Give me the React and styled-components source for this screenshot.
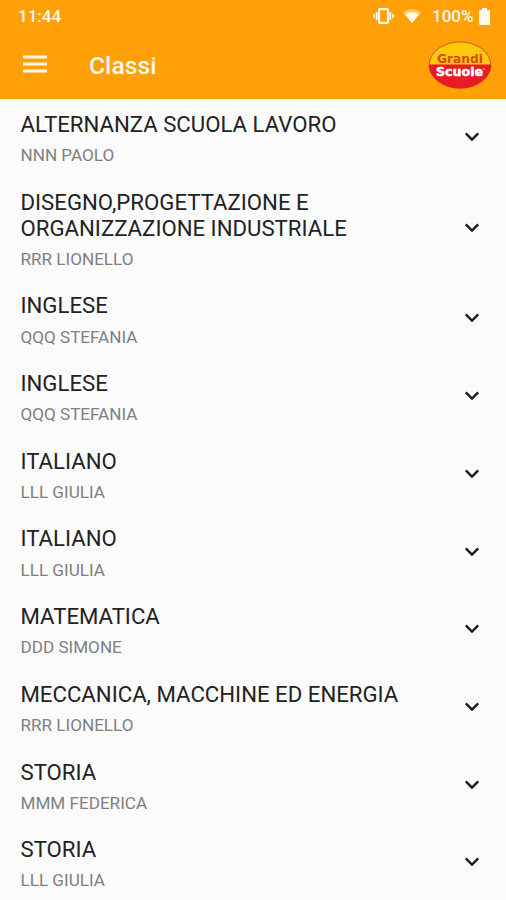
import React from 'react';
import styled, { createGlobalStyle } from 'styled-components';

const GlobalStyle = createGlobalStyle`
    body {
        margin: 0;
        background: #fbfbfb;
        font-family: Roboto, "Liberation Sans", sans-serif;
    }
`

const Screen = styled.div`
    width: 506px;
    height: 900px;
    overflow: hidden;
    background: #fbfbfb;
`

const Header = styled.header`
    height: 98.5px;
    background: #ffa006;
    color: #fff8ec;
`

const StatusBar = styled.div`
    display: flex;
    align-items: center;
    height: 32px;
    padding: 0 16px 0 18px;
    box-sizing: border-box;
    font-size: 17px;
    font-weight: 500;
`

const StatusIcons = styled.div`
    display: flex;
    align-items: center;
    margin-left: auto;
`

const Battery = styled.span`
    width: 42px;
    margin: 0 5px 0 11px;
    white-space: nowrap;
`

const Toolbar = styled.div`
    display: flex;
    align-items: center;
    height: 66px;
    padding: 0 14px 0 23px;
    box-sizing: border-box;
`

const MenuButton = styled.button`
    display: flex;
    margin-top: -2px;
    padding: 0;
    border: 0;
    color: inherit;
    background: transparent;
    cursor: pointer;
`

const Title = styled.h1`
    flex: 1;
    margin: 2px 0 0 42px;
    font-size: 24.7px;
    line-height: 30px;
    font-weight: 500;
`

const List = styled.ul`
    margin: 0;
    padding: 0;
    list-style: none;
`

const Row = styled.li`
    display: flex;
    align-items: center;
    justify-content: space-between;
    padding: 13.5px 26px 11px 20.5px;
`

const Subject = styled.div`
    max-width: 400px;
    font-size: 22.2px;
    line-height: 25.9px;
    color: #222;
    white-space: pre-line;
`

const Teacher = styled.div`
    margin-top: 7.3px;
    font-size: 17.1px;
    line-height: 20px;
    color: #808080;
`

const classes = [
    { subject: 'ALTERNANZA SCUOLA LAVORO', teacher: 'NNN PAOLO' },
    { subject: 'DISEGNO,PROGETTAZIONE E\nORGANIZZAZIONE INDUSTRIALE', teacher: 'RRR LIONELLO' },
    { subject: 'INGLESE', teacher: 'QQQ STEFANIA' },
    { subject: 'INGLESE', teacher: 'QQQ STEFANIA' },
    { subject: 'ITALIANO', teacher: 'LLL GIULIA' },
    { subject: 'ITALIANO', teacher: 'LLL GIULIA' },
    { subject: 'MATEMATICA', teacher: 'DDD SIMONE' },
    { subject: 'MECCANICA, MACCHINE ED ENERGIA', teacher: 'RRR LIONELLO' },
    { subject: 'STORIA', teacher: 'MMM FEDERICA' },
    { subject: 'STORIA', teacher: 'LLL GIULIA' },
];

const VibrateIcon = styled.svg`
    margin-right: 9px;
`

const ChevronIcon = styled.svg`
    margin-bottom: 3px;
`

function Vibrate() {
    return (
        <VibrateIcon width="21" height="16" viewBox="0 0 21 16" fill="none" stroke="currentColor">
            <rect x="6" y="1.2" width="9" height="13.6" rx="1" strokeWidth="2.2" />
            <path d="M3.7 4v8M17.3 4v8" strokeWidth="1.9" />
            <path d="M1.2 6v4M19.8 6v4" strokeWidth="1.6" />
        </VibrateIcon>
    )
}

function Wifi() {
    return (
        <svg width="18" height="14" viewBox="0 0 18 14">
            <path d="M0 3.6C5-.9 13-.9 18 3.6L9 14z" fill="currentColor" opacity=".45" />
            <path d="M2 5.4C6 2.6 12 2.6 16 5.4L9 14z" fill="currentColor" />
        </svg>
    )
}

function BatteryFull() {
    return (
        <svg width="11" height="17" viewBox="0 0 11 17">
            <path d="M3 0h5v2h2q1 0 1 1v13q0 1-1 1H1q-1 0-1-1V3q0-1 1-1h2z" fill="currentColor" />
        </svg>
    )
}

function Logo() {
    return (
        <svg width="64" height="50" viewBox="0 0 64 50">
            <clipPath id="lower">
                <rect x="0" y="24.5" width="64" height="26" />
            </clipPath>
            <ellipse cx="32" cy="25" rx="30.8" ry="23.2" fill="#fdc70b" stroke="#d8551a" strokeWidth="1" />
            <ellipse cx="32" cy="25" rx="31" ry="23.5" fill="#e91b26" clipPath="url(#lower)" />
            <text fontFamily="'DejaVu Sans', sans-serif" fontWeight="700" fontSize="12.8">
                <tspan x="9" y="22.7" textLength="46" lengthAdjust="spacingAndGlyphs" fill="#d9480f">Grandi</tspan>
                <tspan x="8" y="36" textLength="47" lengthAdjust="spacingAndGlyphs" fill="#fff" stroke="#fff" strokeWidth=".5">Scuole</tspan>
            </text>
            <circle cx="56" cy="29" r=".7" fill="#fff" />
        </svg>
    )
}

function Chevron() {
    return (
        <ChevronIcon width="16" height="10" viewBox="0 0 16 10" fill="none" stroke="#191919" strokeWidth="2.3">
            <path d="M1.8 1.4L8 7.6l6.2-6.2" />
        </ChevronIcon>
    )
}

function App() {
    return (
        <Screen>
            <GlobalStyle />
            <Header>
                <StatusBar>
                    <span>11:44</span>
                    <StatusIcons>
                        <Vibrate />
                        <Wifi />
                        <Battery>100%</Battery>
                        <BatteryFull />
                    </StatusIcons>
                </StatusBar>
                <Toolbar>
                    <MenuButton aria-label="Menu">
                        <svg width="24" height="18" viewBox="0 0 24 18" fill="currentColor">
                            <path d="M0 .5h24v3H0zM0 7.5h24v3H0zM0 14.5h24v3H0z" />
                        </svg>
                    </MenuButton>
                    <Title>Classi</Title>
                    <Logo />
                </Toolbar>
            </Header>
            <List>
                {classes.map((item, index) => (
                    <Row key={index}>
                        <div>
                            <Subject>{item.subject}</Subject>
                            <Teacher>{item.teacher}</Teacher>
                        </div>
                        <Chevron />
                    </Row>
                ))}
            </List>
        </Screen>
    )
}

export default App
